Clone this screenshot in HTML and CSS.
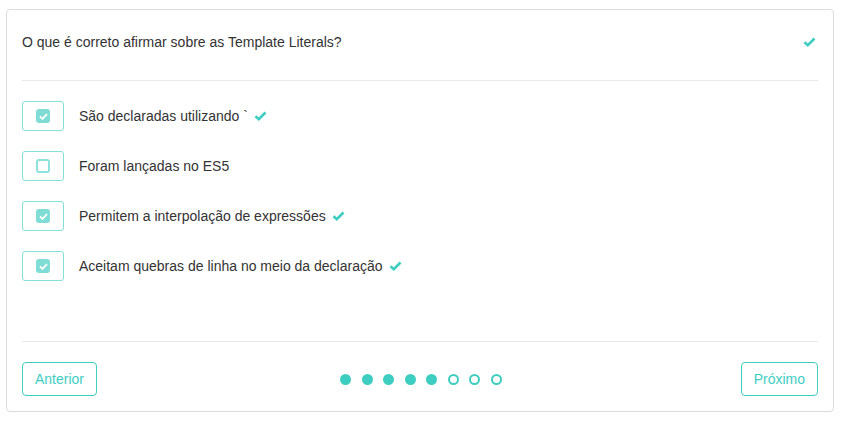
FILE: index.html
```html
<!DOCTYPE html>
<html lang="pt">
<head>
<meta charset="utf-8">
<link rel="stylesheet" href="styles.css">
</head>
<body>
<div class="card">
  <div class="header">
    <span class="question">O que é correto afirmar sobre as Template Literals?</span>
    <svg class="tick" width="13" height="10" viewBox="0 0 13 10"><path d="M1.5 5.2 L4.8 8.2 L11.5 1.5" fill="none" stroke="#3ecdc1" stroke-width="2.6"/></svg>
  </div>
  <div class="options">
    <div class="option">
      <div class="box"><span class="cb checked"><svg width="9" height="7" viewBox="0 0 9 7"><path d="M1 3.5 L3.5 5.8 L8 1.2" fill="none" stroke="#fff" stroke-width="1.8"/></svg></span></div>
      <span class="label">São declaradas utilizando `</span>
      <svg class="tick" width="13" height="10" viewBox="0 0 13 10"><path d="M1.5 5.2 L4.8 8.2 L11.5 1.5" fill="none" stroke="#3ecdc1" stroke-width="2.6"/></svg>
    </div>
    <div class="option">
      <div class="box"><span class="cb"></span></div>
      <span class="label">Foram lançadas no ES5</span>
    </div>
    <div class="option">
      <div class="box"><span class="cb checked"><svg width="9" height="7" viewBox="0 0 9 7"><path d="M1 3.5 L3.5 5.8 L8 1.2" fill="none" stroke="#fff" stroke-width="1.8"/></svg></span></div>
      <span class="label">Permitem a interpolação de expressões</span>
      <svg class="tick" width="13" height="10" viewBox="0 0 13 10"><path d="M1.5 5.2 L4.8 8.2 L11.5 1.5" fill="none" stroke="#3ecdc1" stroke-width="2.6"/></svg>
    </div>
    <div class="option">
      <div class="box"><span class="cb checked"><svg width="9" height="7" viewBox="0 0 9 7"><path d="M1 3.5 L3.5 5.8 L8 1.2" fill="none" stroke="#fff" stroke-width="1.8"/></svg></span></div>
      <span class="label">Aceitam quebras de linha no meio da declaração</span>
      <svg class="tick" width="13" height="10" viewBox="0 0 13 10"><path d="M1.5 5.2 L4.8 8.2 L11.5 1.5" fill="none" stroke="#3ecdc1" stroke-width="2.6"/></svg>
    </div>
  </div>
  <div class="footer">
    <button class="btn">Anterior</button>
    <div class="dots">
      <span class="dot on"></span><span class="dot on"></span><span class="dot on"></span><span class="dot on"></span><span class="dot on"></span><span class="dot"></span><span class="dot"></span><span class="dot"></span>
    </div>
    <button class="btn">Próximo</button>
  </div>
</div>
</body>
</html>
```

FILE: styles.css
```css
* { box-sizing: border-box; }
body {
  margin: 9px 0 0 6px;
  font-family: "Liberation Sans", Arial, sans-serif;
  font-size: 14px;
  color: #333;
  background: #fff;
}
.card {
  width: 828px;
  height: 403px;
  border: 1px solid #dcdcdc;
  border-radius: 4px;
  padding: 0 15px;
  display: flex;
  flex-direction: column;
}
.header {
  display: flex;
  align-items: center;
  justify-content: space-between;
  height: 71px;
  padding-bottom: 6px;
  padding-right: 2px;
  border-bottom: 1px solid #e9e9e9;
}
.question { line-height: 20px; }
.tick { display: block; flex: none; }
.options {
  display: flex;
  flex-direction: column;
  gap: 20px;
  padding-top: 20px;
  flex: 1;
  border-bottom: 1px solid #e9e9e9;
}
.option {
  display: flex;
  align-items: center;
  height: 30px;
}
.box {
  width: 42px;
  height: 30px;
  border: 1px solid #84e0d8;
  border-radius: 3px;
  display: flex;
  align-items: center;
  justify-content: center;
  margin-right: 15px;
}
.cb {
  width: 14px;
  height: 14px;
  border: 2px solid #8de2db;
  border-radius: 3px;
  display: flex;
  align-items: center;
  justify-content: center;
}
.cb.checked {
  background: #80ddd5;
  border-color: #80ddd5;
}
.cb svg { display: block; }
.label { line-height: 20px; margin-right: 6px; }
.footer {
  display: flex;
  align-items: center;
  justify-content: space-between;
  padding: 20px 0 15px;
}
.btn {
  font-family: "Liberation Sans", Arial, sans-serif;
  font-size: 14px;
  color: #3ecdc1;
  background: #fff;
  border: 1px solid #3ecdc1;
  border-radius: 4px;
  height: 34px;
  padding: 0 12px;
}
.dots {
  display: flex;
  gap: 10.5px;
  margin-left: 4px;
}
.dot {
  width: 11px;
  height: 11px;
  border-radius: 50%;
  border: 2px solid #3ecdc1;
}
.dot.on { background: #3ecdc1; }
```
